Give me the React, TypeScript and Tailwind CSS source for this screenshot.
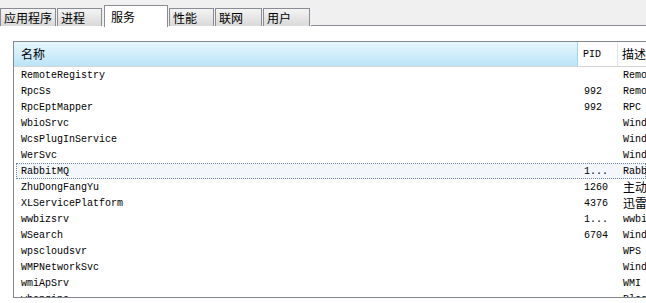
import React from "react";

const rows: [string, string, string][] = [
  ["RemoteRegistry", "", "Remote Registry"],
  ["RpcSs", "992", "Remote Procedure Call (RPC)"],
  ["RpcEptMapper", "992", "RPC Endpoint Mapper"],
  ["WbioSrvc", "", "Windows Biometric Service"],
  ["WcsPlugInService", "", "Windows Color System"],
  ["WerSvc", "", "Windows Error Reporting"],
  ["RabbitMQ", "1...", "RabbitMQ"],
  ["ZhuDongFangYu", "1260", "主动防御"],
  ["XLServicePlatform", "4376", "迅雷基础服务"],
  ["wwbizsrv", "1...", "wwbizsrv"],
  ["WSearch", "6704", "Windows Search"],
  ["wpscloudsvr", "", "WPS Office Cloud"],
  ["WMPNetworkSvc", "", "Windows Media Player"],
  ["wmiApSrv", "", "WMI Performance"],
  ["wbengine", "", "Block Level Backup"],
];

const tabs = ["应用程序", "进程", "服务", "性能", "联网", "用户"];
const tabW = [56, 45, 64, 45, 47, 47];

const cjk = "font-['Noto_Sans_CJK_SC',sans-serif]";
const mono = "font-['Liberation_Mono','Noto_Sans_CJK_SC',monospace]";

export default function App() {
  return (
    <div className="w-[646px] h-[303px] bg-white overflow-hidden relative">
      {/* tab strip */}
      <div className="h-[26px] bg-[#f0f0f0] flex items-end">
        {tabs.map((t, i) => {
          const sel = i === 2;
          return (
            <div
              key={t}
              className={
                sel
                  ? `shrink-0 h-[22px] -mb-[1px] mx-[1px] bg-white border border-b-0 border-[#898c95] flex items-start pl-[6px] pt-[3px] text-[12px] leading-[16px] text-black ${cjk}`
                  : `shrink-0 h-[18px] mr-[1px] border border-b-0 border-[#898c95] bg-gradient-to-b from-[#f4f4f4] to-[#d9d9d9] flex items-center pl-[3px] text-[12px] leading-[16px] text-black ${cjk}`
              }
              style={{ width: tabW[i] }}
            >
              {t}
            </div>
          );
        })}
        <div className="flex-1 border-b border-[#898c95]" />
      </div>
      {/* content */}
      <div className="pl-[13px] pt-[15px]">
        <div className="h-[257px] border-l border-t border-b border-[#828790] bg-white overflow-hidden">
          {/* header */}
          <div className="h-[25px] flex border-b border-[#d5d5d5]">
            <div className={`shrink-0 w-[564px] bg-gradient-to-b from-[#e6f6fd] to-[#bbe4f8] border-r border-[#96d9f9] flex items-center pl-[7px] text-[12px] text-black ${cjk}`}>
              名称
            </div>
            <div className={`shrink-0 w-[40px] border-r border-[#e5e5e5] flex items-center pl-[5px] text-[10px] text-black ${mono}`}>
              PID
            </div>
            <div className={`shrink-0 flex items-center pl-[4px] text-[12px] text-black whitespace-nowrap ${cjk}`}>
              描述
            </div>
          </div>
          {rows.map(([n, p, d], i) => {
            const sel = i === 6;
            const isCjk = /[\u4e00-\u9fff]/.test(d);
            return (
              <div
                key={n}
                className={
                  "h-[16px] flex items-center ml-[2px] whitespace-nowrap " +
                  (sel
                    ? "border border-dotted border-[#6f86a8] bg-[#f3f6fb]"
                    : "border border-transparent")
                }
              >
                <div className={`shrink-0 w-[562px] pl-[4px] text-[10px] text-black ${mono}`}>{n}</div>
                <div className={`shrink-0 w-[40px] pl-[5px] text-[10px] text-black ${mono}`}>{p}</div>
                <div
                  className={
                    isCjk
                      ? `shrink-0 pl-[4px] text-[12px] leading-[14px] text-black ${cjk}`
                      : `shrink-0 pl-[4px] text-[10px] text-black ${mono}`
                  }
                >
                  {d}
                </div>
              </div>
            );
          })}
        </div>
      </div>
    </div>
  );
}
